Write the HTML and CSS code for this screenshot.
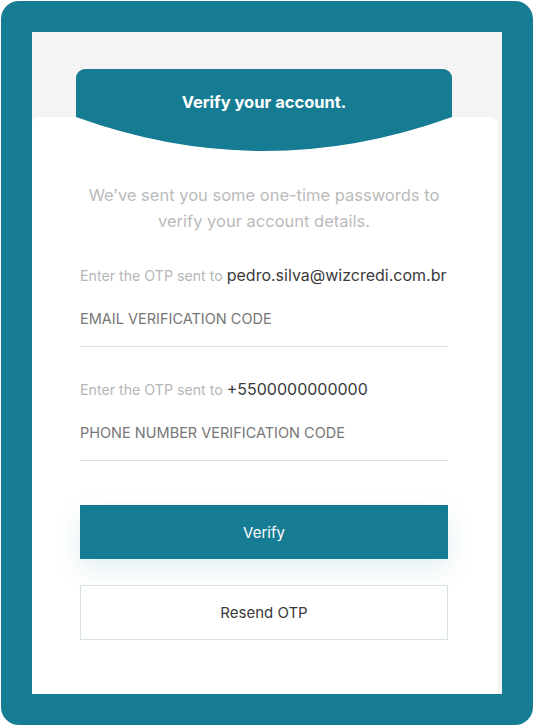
FILE: index.html
```html
<!DOCTYPE html>
<html lang="en">
<head>
<meta charset="utf-8">
<title>Verify your account</title>
<link rel="stylesheet" href="styles.css">
</head>
<body>
<div class="frame">
  <div class="screen">
    <div class="header">
      <h1 class="title">Verify your account.</h1>
    </div>
    <div class="card">
      <p class="intro">We’ve sent you some one-time passwords to verify your account details.</p>

      <div class="field">
        <div class="otp-note">Enter the OTP sent to <span class="target">pedro.silva@wizcredi.com.br</span></div>
        <input class="code-input" type="text" placeholder="EMAIL VERIFICATION CODE">
      </div>

      <div class="field">
        <div class="otp-note">Enter the OTP sent to <span class="target">+5500000000000</span></div>
        <input class="code-input" type="text" placeholder="PHONE NUMBER VERIFICATION CODE">
      </div>

      <button class="btn btn-primary" type="button">Verify</button>
      <button class="btn btn-outline" type="button">Resend OTP</button>
    </div>
  </div>
</div>
</body>
</html>
```

FILE: styles.css
```css
* { box-sizing: border-box; }

body {
  margin: 0;
  background: #ffffff;
  font-family: Inter, "Noto Sans", "Liberation Sans", sans-serif;
}

.frame {
  margin: 1px;
  width: 532px;
  height: 724px;
  padding: 31px;
  background: #167c93;
  border-radius: 18px;
}

.screen {
  height: 662px;
  background: #f4f4f4;
  overflow: hidden;
  padding-top: 37px;
}

.header {
  position: relative;
  z-index: 1;
  width: 376px;
  height: 82px;
  margin-left: 44px;
  margin-bottom: -34px;
  background: #167c93;
  clip-path: path("M0,9 A9,9 0 0 1 9,0 H367 A9,9 0 0 1 376,9 V48 Q188,116 0,48 Z");
  padding-top: 23px;
}

.title {
  margin: 0;
  color: #ffffff;
  font-size: 16.5px;
  line-height: 20px;
  font-weight: 700;
  text-align: center;
}

.card {
  width: 466px;
  min-height: 700px;
  background: #ffffff;
  border-radius: 8px;
  padding: 65px 50px 40px 48px;
}

.intro {
  margin: 0;
  color: #bbbbbb;
  font-size: 16.5px;
  line-height: 26px;
  text-align: center;
}

.field {
  margin-top: 31px;
}
.field + .field {
  margin-top: 32px;
}

.otp-note {
  color: #b6b6b6;
  font-size: 14.2px;
  line-height: 20px;
  white-space: nowrap;
}

.target {
  color: #3a3a3a;
  font-size: 16px;
}

.code-input {
  display: block;
  width: 100%;
  height: 61px;
  padding: 18px 0 14px;
  border: 0;
  border-bottom: 1px solid #dedede;
  outline: none;
  background: transparent;
  font-family: inherit;
  font-size: 14.5px;
  color: #333;
}
.code-input::placeholder {
  color: #767676;
  opacity: 1;
}

.btn {
  display: block;
  width: 100%;
  font-family: inherit;
  font-size: 15px;
  cursor: pointer;
}

.btn-primary {
  margin-top: 44px;
  height: 54px;
  border: 0;
  background: #167c93;
  color: #ffffff;
  box-shadow: 0 10px 26px rgba(22, 124, 147, 0.12);
}

.btn-outline {
  margin-top: 26px;
  height: 55px;
  border: 1px solid #d6e4ea;
  background: #ffffff;
  color: #3a3a3a;
}
```
